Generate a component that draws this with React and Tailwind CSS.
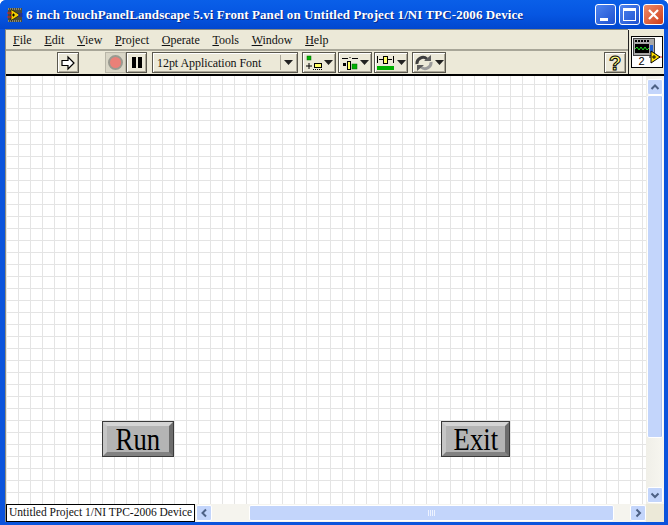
import React from "react";

const Mn = ({ c, rest }) => (
  <span><u className="underline underline-offset-1">{c}</u>{rest}</span>
);

const TbBtn = ({ className, children }) => (
  <div className={"h-[21px] flex items-center justify-center bg-[#ece9d8] border border-[#5a584e] shadow-[inset_1px_1px_0_#ffffff,inset_-1px_-1px_0_#aca899] " + className}>
    {children}
  </div>
);

const Caret = () => (
  <svg width="9" height="5" viewBox="0 0 9 5"><path d="M0 0h9L4.500 5z" fill="#222" /></svg>
);

const ScrollBtn = ({ dir }) => {
  const paths = {
    up: "M2.500 8L6 4.500L9.500 8",
    down: "M2.500 4.500L6 8L9.500 4.500",
    left: "M8 2.500L4.500 6L8 9.500",
    right: "M4.500 2.500L8 6L4.500 9.500",
  };
  return (
    <div className="w-[16px] h-[16px] rounded-[2px] border border-white bg-[#c3d5fb] flex items-center justify-center shrink-0">
      <svg width="12" height="12" viewBox="0 0 12 12"><path d={paths[dir]} fill="none" stroke="#4d6185" strokeWidth="2" /></svg>
    </div>
  );
};

const FpButton = ({ className, label }) => (
  <div className={"absolute top-[345px] h-[36px] bg-[#b4b4b4] border border-[#3a3a3a] " + className}>
    <div className="w-full h-full flex items-center justify-center border-[4px] border-t-[#d4d4d4] border-l-[#c6c6c6] border-r-[#6c6c6c] border-b-[#828282] text-[31px] leading-none text-black font-normal">
      <span className="inline-block scale-x-[0.86] whitespace-nowrap">{label}</span>
    </div>
  </div>
);

export default function App() {
  return (
    <div className="w-[668px] h-[525px] flex flex-col bg-[#0a53dc] overflow-hidden rounded-t-[6px]" style={{ fontFamily: '"Liberation Serif", serif' }}>
      {/* Title bar */}
      <div className="h-[29px] shrink-0 flex items-center pl-[7px] pr-[4px] bg-gradient-to-b from-[#0a5fe8] via-[#0656e2] to-[#0247cf]">
        <svg width="16" height="16" viewBox="0 0 16 16" className="shrink-0">
          <rect x="1" y="1" width="14" height="14" fill="#4a4a38" />
          <path d="M1 2h14M1 14h14" stroke="#c9c9b0" strokeDasharray="1 1" />
          <path d="M4 2.500L13 8L4 13.500z" fill="#f4d000" stroke="#000" strokeWidth=".6" />
          <path d="M0 6h5M0 10h5" stroke="#e02020" />
          <path d="M11 7h5M11 9h5" stroke="#1020c0" />
          <path d="M5 8h3M6.500 6.500v3" stroke="#000" />
        </svg>
        <div className="ml-[3px] text-[13px] font-bold text-white tracking-[0.08px] whitespace-nowrap [text-shadow:1px_1px_0_#0a2a8a]">
          6 inch TouchPanelLandscape 5.vi Front Panel on Untitled Project 1/NI TPC-2006 Device
        </div>
        <div className="ml-auto flex gap-[3px]">
          <div className="w-[21px] h-[21px] rounded-[3px] border border-white bg-gradient-to-br from-[#4f84ef] to-[#1e50d0] flex items-end pl-[4px] pb-[3px]">
            <div className="w-[8px] h-[3px] bg-white" />
          </div>
          <div className="w-[21px] h-[21px] rounded-[3px] border border-white bg-gradient-to-br from-[#4f84ef] to-[#1e50d0] flex items-center justify-center">
            <div className="w-[13px] h-[13px] border border-white border-t-[3px]" />
          </div>
          <div className="w-[21px] h-[21px] rounded-[3px] border border-white bg-gradient-to-br from-[#ec8a68] to-[#cf3a12] flex items-center justify-center">
            <svg width="13" height="13" viewBox="0 0 13 13"><path d="M2 2L11 11M11 2L2 11" stroke="#fff" strokeWidth="2.200" /></svg>
          </div>
        </div>
      </div>

      {/* Body */}
      <div className="flex-1 min-h-0 ml-[5px] mr-[4px] mb-[3px] flex flex-col bg-[#ece9d8] border-l border-[#8a8a80]">
        {/* Menu + toolbar + VI icon */}
        <div className="h-[47px] shrink-0 flex border-b-2 border-black">
          <div className="flex-1 flex flex-col min-w-0">
            <div className="h-[22px] shrink-0 flex items-center pl-[7px] gap-[12.7px] text-[12px] text-[#111] border-b-2 border-[#a8a698] border-t border-t-[#8a8a80]">
              <Mn c="F" rest="ile" />
              <Mn c="E" rest="dit" />
              <Mn c="V" rest="iew" />
              <Mn c="P" rest="roject" />
              <Mn c="O" rest="perate" />
              <Mn c="T" rest="ools" />
              <Mn c="W" rest="indow" />
              <Mn c="H" rest="elp" />
            </div>
            <div className="flex-1 flex items-center pl-[51px] pr-[2px]">
              <TbBtn className="w-[22px]">
                <svg width="16" height="16" viewBox="0 0 16 16"><path d="M2 5.500h6V2l6 6-6 6v-3.500H2z" fill="#fff" stroke="#000" strokeWidth="1.200" /></svg>
              </TbBtn>
              <div className="ml-[26px] w-[21px] h-[21px] flex items-center justify-center bg-[#d9d6c6] border border-[#b9b6a8]">
                <div className="w-[15px] h-[15px] rounded-full bg-[#ea8078] border-2 border-[#9a9a90]" />
              </div>
              <TbBtn className="w-[21px]">
                <div className="flex gap-[2px]">
                  <div className="w-[4px] h-[11px] bg-black" />
                  <div className="w-[4px] h-[11px] bg-black" />
                </div>
              </TbBtn>
              <TbBtn className="ml-[5px] w-[146px] !justify-start pl-[4px] text-[12px] text-[#111] relative">
                <span className="tracking-[-0.05px]">12pt Application Font</span>
                <div className="absolute right-[1px] top-[2px] bottom-[2px] w-[16px] border-l border-[#aca899] flex items-center justify-center">
                  <Caret />
                </div>
              </TbBtn>
              <TbBtn className="ml-[4px] w-[34px] gap-[1px]">
                <svg width="18" height="16" viewBox="0 0 18 16">
                  <rect x="2" y="1" width="4" height="4" fill="#00b000" stroke="#060" strokeWidth=".5" />
                  <path d="M1 11h6M4 8v6" stroke="#000" />
                  <rect x="9.500" y="8.500" width="7" height="4" fill="#ffff66" stroke="#000" />
                  <path d="M8 14.500h9" stroke="#000" strokeDasharray="1 1" />
                </svg>
                <Caret />
              </TbBtn>
              <TbBtn className="ml-[2px] w-[34px] gap-[1px]">
                <svg width="18" height="16" viewBox="0 0 18 16">
                  <path d="M1 3.500h6M11 3.500h6M9 2v1" stroke="#000" />
                  <rect x="2" y="8" width="3" height="3" fill="#000" />
                  <rect x="6.500" y="6.500" width="3" height="8" fill="#ffff66" stroke="#000" />
                  <rect x="11" y="9" width="5" height="5" fill="#00b000" stroke="#060" strokeWidth=".5" />
                </svg>
                <Caret />
              </TbBtn>
              <TbBtn className="ml-[2px] w-[34px] gap-[1px]">
                <svg width="20" height="16" viewBox="0 0 20 16">
                  <path d="M1.500 1v7M17.500 1v7" stroke="#000" />
                  <path d="M3 4.500h4M12 4.500h4" stroke="#000" />
                  <rect x="7.500" y="1.500" width="4" height="7" fill="#ffff66" stroke="#000" />
                  <rect x="1" y="11" width="17" height="4" fill="#00b000" />
                </svg>
                <Caret />
              </TbBtn>
              <TbBtn className="ml-[4px] w-[34px] gap-[1px]">
                <svg width="20" height="16" viewBox="0 0 20 16">
                  <path d="M3 9a6 6 0 0 1 10-5" fill="none" stroke="#3e3e3e" strokeWidth="3" />
                  <path d="M17 7a6 6 0 0 1-10 5" fill="none" stroke="#9c9c9c" strokeWidth="3" />
                  <path d="M10 6h7V0zM10 10H3v6z" fill="#5c5c5c" />
                </svg>
                <Caret />
              </TbBtn>
              <TbBtn className="ml-auto w-[22px]">
                <span className="text-[20px] leading-none font-bold text-[#ffff80] [-webkit-text-stroke:1px_#000]" style={{ fontFamily: '"Liberation Sans", sans-serif' }}>?</span>
              </TbBtn>
            </div>
          </div>
          <div className="w-[36px] shrink-0 border-l border-[#222] flex items-center justify-center mt-[1px]">
            <div className="w-[32px] h-[32px] bg-white border border-black relative overflow-hidden">
              <div className="absolute left-[1px] top-[1px] w-[22px] h-[18px] bg-[#a8a8a8] border border-[#444]">
                <div className="absolute left-[1px] top-[1px] flex gap-[1px]">
                  <div className="w-[2px] h-[2px] bg-black" />
                  <div className="w-[2px] h-[2px] bg-black" />
                  <div className="w-[2px] h-[2px] bg-black" />
                  <div className="w-[2px] h-[2px] bg-black" />
                  <div className="w-[2px] h-[2px] bg-black" />
                </div>
                <svg className="absolute left-[1px] top-[5px]" width="14" height="9" viewBox="0 0 14 9">
                  <rect width="14" height="9" fill="#000" />
                  <path d="M0 5l2-2 2 3 2-3 2 3 2-3 2 3 2-2" fill="none" stroke="#20e020" />
                </svg>
                <div className="absolute right-[1px] top-[6px] w-[3px] h-[8px] bg-[#2060d0]" />
              </div>
              <svg className="absolute left-[17px] top-[13px]" width="14" height="14" viewBox="0 0 14 14">
                <path d="M9 7h5" stroke="#e02020" />
                <path d="M0 7h3" stroke="#000" />
                <path d="M2 1L11 7L2 13z" fill="#ffe000" stroke="#000" />
                <path d="M3 7h4M5 5v4" stroke="#000" />
              </svg>
              <span className="absolute left-[7px] top-[19px] text-[11px] leading-[11px] text-black" style={{ fontFamily: '"Liberation Sans", sans-serif' }}>2</span>
            </div>
          </div>
        </div>

        {/* Canvas + vertical scrollbar */}
        <div className="flex-1 min-h-0 flex">
          <div className="flex-1 relative bg-white bg-[linear-gradient(to_right,#e4e4e4_1px,transparent_1px),linear-gradient(to_bottom,#e4e4e4_1px,transparent_1px)] bg-[length:12px_12px] bg-[position:0px_8px]">
            <FpButton className="left-[96px] w-[72px]" label="Run" />
            <FpButton className="left-[435px] w-[69px]" label="Exit" />
          </div>
          <div className="w-[18px] shrink-0 flex flex-col items-center pt-[3px] pb-[1px] bg-gradient-to-r from-[#f0efe8] to-[#f7f6f0]">
            <ScrollBtn dir="up" />
            <div className="w-[16px] h-[343px] rounded-[2px] border border-white bg-[#c3d5fb] shadow-[inset_-1px_0_0_#a8c0f0]" />
            <div className="flex-1" />
            <ScrollBtn dir="down" />
          </div>
        </div>

        {/* Bottom bar */}
        <div className="h-[18px] shrink-0 flex items-stretch bg-[#f5f4ee]">
          <div className="w-[189px] shrink-0 bg-white border border-black text-[11.5px] leading-[15px] pl-[2px] text-[#111] whitespace-nowrap overflow-hidden">
            Untitled Project 1/NI TPC-2006 Device
          </div>
          <div className="flex-1 flex items-center pl-[1px]">
            <ScrollBtn dir="left" />
            <div className="w-[37px]" />
            <div className="w-[365px] h-[16px] rounded-[2px] border border-white bg-[#c3d5fb] flex items-center justify-center gap-[1px]">
              <div className="w-[1px] h-[6px] bg-[#eef3ff]" />
              <div className="w-[1px] h-[6px] bg-[#eef3ff]" />
              <div className="w-[1px] h-[6px] bg-[#eef3ff]" />
              <div className="w-[1px] h-[6px] bg-[#eef3ff]" />
            </div>
            <div className="flex-1" />
            <ScrollBtn dir="right" />
            <div className="w-[18px] shrink-0 bg-[#ece9d8] self-stretch" />
          </div>
        </div>
      </div>
    </div>
  );
}
